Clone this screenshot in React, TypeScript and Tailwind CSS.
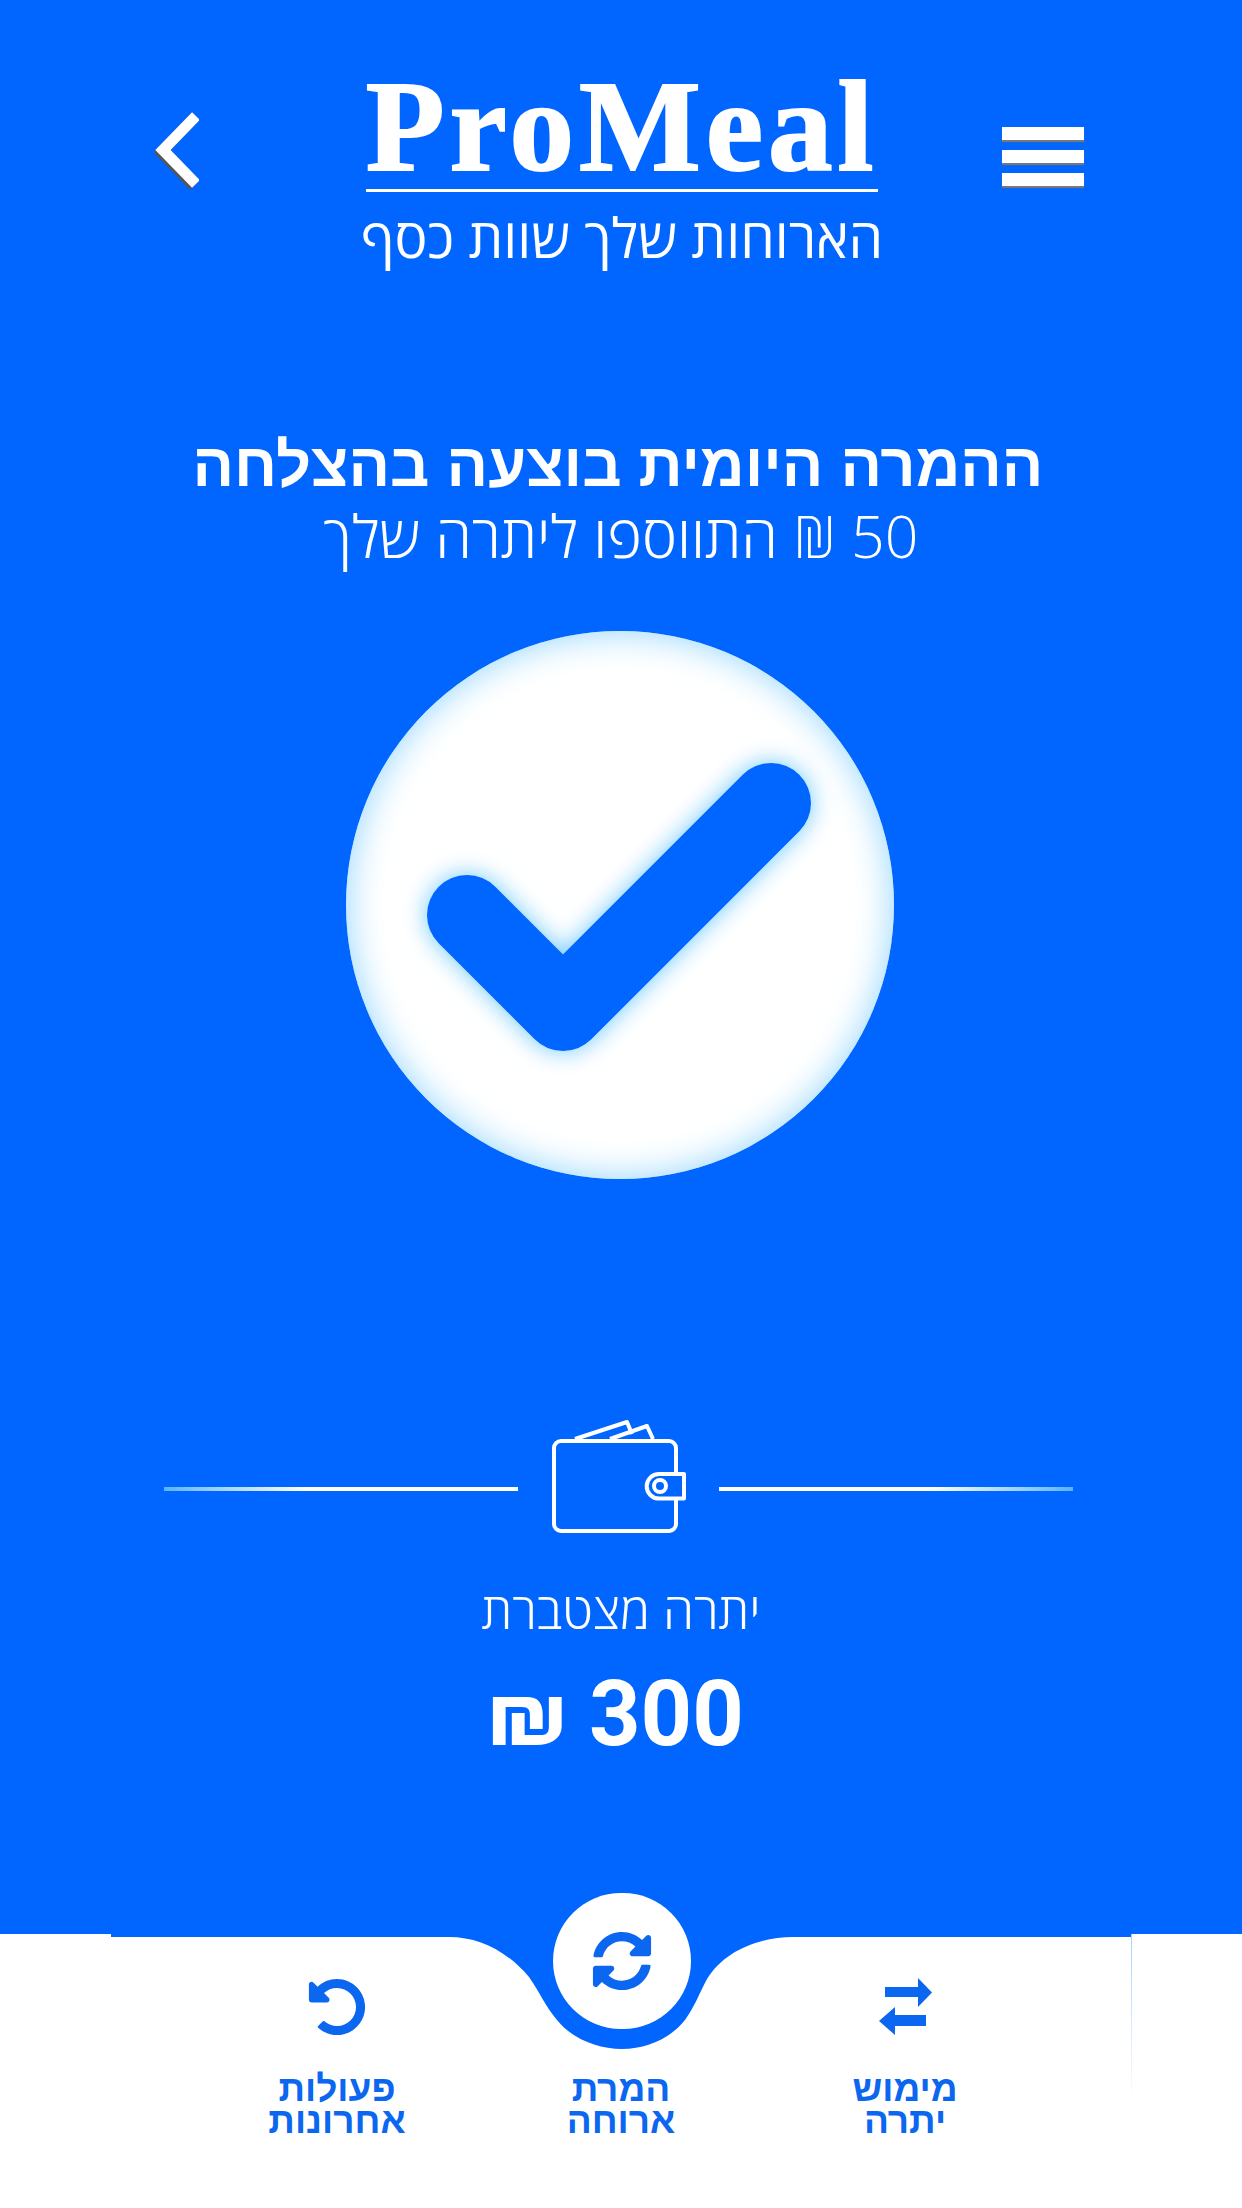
import type { ReactNode } from 'react';
import { FaSyncAlt, FaUndoAlt } from 'react-icons/fa';

const thin = 'font-["Open_Sans","Liberation_Sans",sans-serif] font-light';
const heavy = 'font-["Liberation_Sans",sans-serif] font-bold';

function Header() {
  return (
    <header className="flex items-start pl-[155px] pt-[75px]">
      <svg width="44" height="78" viewBox="0 0 44 78" className="mt-[36px]">
        <path d="M41 5 L8 39 L41 73" fill="none" stroke="#555" strokeWidth="11" transform="translate(-2 2)" />
        <path d="M41 5 L8 39 L41 73" fill="none" stroke="#fff" strokeWidth="11" />
      </svg>
      <div className="ml-[167px] flex w-[512px] flex-col items-center">
        <div className="font-['Liberation_Serif',serif] text-[129px] font-bold leading-[104px] tracking-[5px] text-white [-webkit-text-stroke:2px_white]">
          ProMeal
        </div>
        <div className="mt-[10px] h-[3px] w-full bg-white" />
        <div dir="rtl" className='mt-[14px] whitespace-nowrap font-["Open_Sans",sans-serif] text-[55px] leading-[62px] text-white'>
          הארוחות שלך שוות כסף
        </div>
      </div>
      <div className="ml-[124px] mt-[52px] flex w-[82px] flex-col gap-[10px]">
        <div className="h-[13px] bg-white shadow-[0_2px_1px_#777]" />
        <div className="h-[13px] bg-white shadow-[0_2px_1px_#777]" />
        <div className="h-[13px] bg-white shadow-[0_2px_1px_#777]" />
      </div>
    </header>
  );
}

function Check() {
  return (
    <div className="mr-[3px] mt-[60px] flex h-[548px] w-[548px] items-center justify-center rounded-full bg-white shadow-[inset_0_0_36px_#8fd4ff]">
      <svg width="548" height="548" viewBox="0 0 548 548">
        <path
          d="M121 284 L217 380 L425 172"
          fill="none"
          stroke="#0066ff"
          strokeWidth="80"
          strokeLinecap="round"
          strokeLinejoin="round"
          className="drop-shadow-[0_0_12px_#6cc8ff]"
        />
      </svg>
    </div>
  );
}

function Wallet() {
  return (
    <svg width="138" height="116" viewBox="0 0 138 116" fill="none" stroke="#fff" strokeWidth="4" strokeLinejoin="round">
      <rect x="4" y="21" width="122" height="90" rx="7" />
      <path d="M25 19 L77 2 L82 14" />
      <path d="M60 19 L97 6 L103 19" />
      <path d="M134 54 H109 a12.3 12.3 0 0 0 0 24.6 H134 Z" fill="#0066ff" />
      <circle cx="110" cy="66" r="6" />
    </svg>
  );
}

function Balance() {
  return (
    <div className="mt-[241px] flex flex-col items-center">
      <div className="mr-[5px] flex items-start">
        <div className="mt-[67px] h-[4px] w-[354px] bg-gradient-to-r from-[#56b4ff] to-white to-40%" />
        <div className="ml-[32px] mr-[31px]">
          <Wallet />
        </div>
        <div className="mt-[67px] h-[4px] w-[354px] bg-gradient-to-l from-[#56b4ff] to-white to-40%" />
      </div>
      <div dir="rtl" className={`${thin} mt-[43px] text-[50px] leading-[62px] text-white`}>
        יתרה מצטברת
      </div>
      <div dir="rtl" className='mr-[10px] mt-[24px] font-["Roboto",sans-serif] text-[90px] font-bold leading-[100px] text-white'>
        300 ₪
      </div>
    </div>
  );
}

function Exchange() {
  return (
    <svg width="53" height="58" viewBox="0 0 53 58" fill="#0b66f0">
      <path d="M6 9 H39 V0 L53 14.5 L39 29 V19 H6 Z" />
      <path d="M47 37 H16 V29 L0 43 L16 57 V48 H47 Z" />
    </svg>
  );
}

function NavItem({ icon, first, second }: { icon?: ReactNode; first: string; second: string }) {
  return (
    <div className="flex w-[284px] flex-col items-center">
      <div className="flex h-[60px] items-center text-[#0b66f0]">{icon}</div>
      <div dir="rtl" className={`${heavy} mt-[36px] text-center text-[37px] leading-[32px] text-[#0b66f0]`}>
        {first}
        <br />
        {second}
      </div>
    </div>
  );
}

function BottomNav() {
  return (
    <nav className="relative h-[274px] bg-white">
      <div className="absolute left-[111px] top-0 h-[3px] w-[1020px] bg-[#0066ff]" />
      <div className="absolute left-[1131px] top-0 h-[170px] w-px bg-gradient-to-b from-[#a9d0ff] to-white" />
      <svg width="344" height="116" viewBox="0 0 344 116" className="absolute left-[449px] top-0">
        <path
          d="M0 3 C30 3 58 17 80 43 C92 60 96 72 108 86 C122 104 148 115 173 115 C198 115 222 104 236 86 C246 72 250 60 258 45 C275 17 310 3 344 3 V0 H0 Z"
          fill="#0066ff"
        />
      </svg>
      <div className="absolute left-[553px] top-[-41px] flex h-[136px] w-[138px] items-center justify-center rounded-full bg-white text-[#0b66f0]">
        <FaSyncAlt size={60} />
      </div>
      <div className="flex justify-center pt-[43px]">
        <NavItem icon={<FaUndoAlt size={58} />} first="פעולות" second="אחרונות" />
        <NavItem first="המרת" second="ארוחה" />
        <NavItem icon={<Exchange />} first="מימוש" second="יתרה" />
      </div>
    </nav>
  );
}

export default function App() {
  return (
    <div className="flex h-[2208px] w-[1242px] flex-col overflow-hidden bg-[#0066ff]">
      <div className="h-[1934px]">
        <Header />
        <main className="flex flex-col items-center">
          <h1 dir="rtl" className={`${heavy} mr-[6px] mt-[159px] text-[61.5px] leading-[76px] text-white`}>
            ההמרה היומית בוצעה בהצלחה
          </h1>
          <p dir="rtl" className={`${thin} mt-[-4px] text-[59px] leading-[72px] text-white`}>
            50 ₪ התווספו ליתרה שלך
          </p>
          <Check />
          <Balance />
        </main>
      </div>
      <BottomNav />
    </div>
  );
}
